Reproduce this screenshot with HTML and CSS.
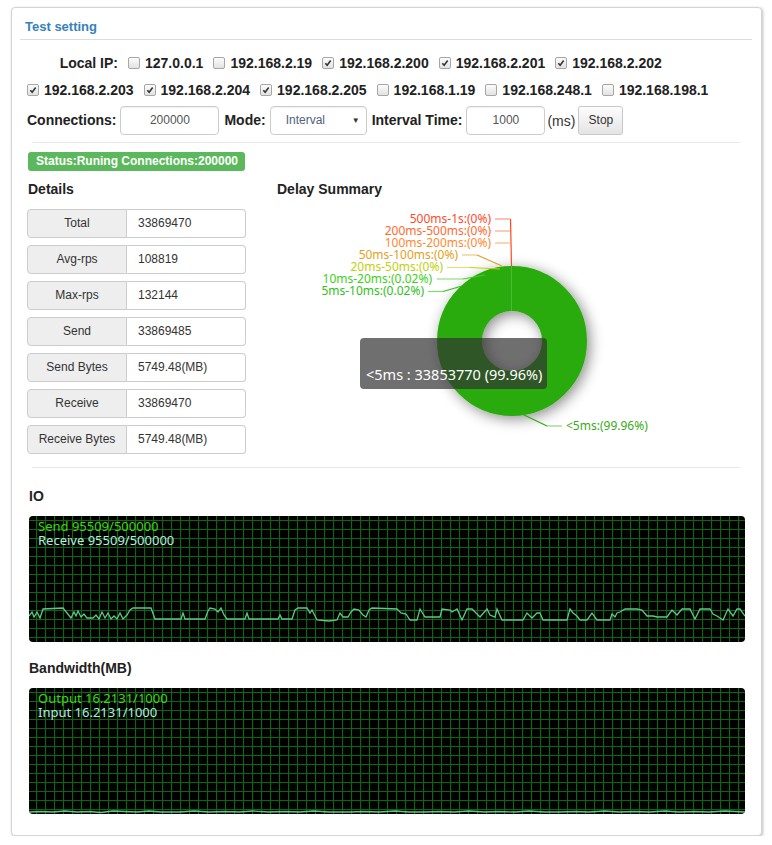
FILE: index.html
```html
<!DOCTYPE html>
<html>
<head>
<meta charset="utf-8">
<title>Test setting</title>
<link rel="stylesheet" href="styles.css">
</head>
<body>
<div class="panel">
  <div class="panel-heading">Test setting</div>
  <div class="panel-body">
    <div class="ip-row">
      <span class="lbl ip-lbl">Local IP:</span>
      <span class="ip"><span class="cb"></span>127.0.0.1</span>
      <span class="ip"><span class="cb"></span>192.168.2.19</span>
      <span class="ip"><span class="cb on"><svg viewBox="0 0 12 12"><path d="M2.8 6.2 L5 8.6 L9.2 3"/></svg></span>192.168.2.200</span>
      <span class="ip"><span class="cb on"><svg viewBox="0 0 12 12"><path d="M2.8 6.2 L5 8.6 L9.2 3"/></svg></span>192.168.2.201</span>
      <span class="ip"><span class="cb on"><svg viewBox="0 0 12 12"><path d="M2.8 6.2 L5 8.6 L9.2 3"/></svg></span>192.168.2.202</span>
      <span class="ip"><span class="cb on"><svg viewBox="0 0 12 12"><path d="M2.8 6.2 L5 8.6 L9.2 3"/></svg></span>192.168.2.203</span>
      <span class="ip"><span class="cb on"><svg viewBox="0 0 12 12"><path d="M2.8 6.2 L5 8.6 L9.2 3"/></svg></span>192.168.2.204</span>
      <span class="ip"><span class="cb on"><svg viewBox="0 0 12 12"><path d="M2.8 6.2 L5 8.6 L9.2 3"/></svg></span>192.168.2.205</span>
      <span class="ip"><span class="cb"></span>192.168.1.19</span>
      <span class="ip"><span class="cb"></span>192.168.248.1</span>
      <span class="ip"><span class="cb"></span>192.168.198.1</span>
    </div>
    <div class="ctrl-row">
      <span class="lbl">Connections:</span>
      <span class="field f-conn">200000</span>
      <span class="lbl">Mode:</span>
      <span class="field f-select">Interval<span class="caret">&#9660;</span></span>
      <span class="lbl">Interval Time:</span>
      <span class="field f-time">1000</span>
      <span class="unit">(ms)</span>
      <span class="btn">Stop</span>
    </div>
    <div class="sep"></div>
    <div class="status-line"><span class="status">Status:Runing Connections:200000</span></div>
    <div class="cols">
      <div class="col-left">
        <h4 class="title">Details</h4>
        <div class="stats">
          <div class="stat"><span class="k">Total</span><span class="v">33869470</span></div>
          <div class="stat"><span class="k">Avg-rps</span><span class="v">108819</span></div>
          <div class="stat"><span class="k">Max-rps</span><span class="v">132144</span></div>
          <div class="stat"><span class="k">Send</span><span class="v">33869485</span></div>
          <div class="stat"><span class="k">Send Bytes</span><span class="v">5749.48(MB)</span></div>
          <div class="stat"><span class="k">Receive</span><span class="v">33869470</span></div>
          <div class="stat"><span class="k">Receive Bytes</span><span class="v">5749.48(MB)</span></div>
        </div>
      </div>
      <div class="col-right">
        <h4 class="title">Delay Summary</h4>
        <svg class="pie" width="469" height="245" viewBox="277 209 469 245">
          <defs>
            <filter id="sh" x="-50%" y="-50%" width="200%" height="200%">
              <feDropShadow dx="3" dy="3" stdDeviation="7" flood-color="#000" flood-opacity="0.45"/>
            </filter>
          </defs>
          <circle cx="512" cy="341" r="52.5" fill="none" stroke="#2bab0e" stroke-width="45" filter="url(#sh)"/>
          <line x1="511.5" y1="266" x2="511.5" y2="311" stroke="#4cbb36" stroke-width="1"/>
          <g fill="none" stroke-width="1.2">
            <polyline points="495,219 510,219" stroke="#ff9585"/>
            <polyline points="510.5,219 511.5,266" stroke="#ff4a1a"/>
            <polyline points="495,231 510,231" stroke="#ffa582"/>
            <polyline points="495,243 510,243" stroke="#ffb784"/>
            <polyline points="462,255 477,255" stroke="#f0c880"/>
            <polyline points="477,255 502,266" stroke="#e0a020"/>
            <polyline points="447,267.5 470,267.5" stroke="#dbe27a"/>
            <polyline points="470,267.5 500,269" stroke="#c2d010"/>
            <polyline points="437,279 463,279" stroke="#8fe27a"/>
            <polyline points="463,279 485,275" stroke="#40d020"/>
            <polyline points="428,291.5 443,291.5" stroke="#86d874"/>
            <polyline points="443,291.5 462,286" stroke="#30c018"/>
            <polyline points="522,414 547,426" stroke="#2aab0e"/>
            <polyline points="547,426 562,426" stroke="#8fd47f"/>
          </g>
          <g class="pl">
            <text x="491" y="223" fill="#ff4a2a">500ms-1s:(0%)</text>
            <text x="491" y="235" fill="#ff6a30">200ms-500ms:(0%)</text>
            <text x="491" y="247" fill="#ff8a30">100ms-200ms:(0%)</text>
            <text x="458" y="259" fill="#e6a020">50ms-100ms:(0%)</text>
            <text x="443" y="271" fill="#c0d010">20ms-50ms:(0%)</text>
            <text x="432" y="283" fill="#40d020">10ms-20ms:(0.02%)</text>
            <text x="424" y="295" fill="#30c020">5ms-10ms:(0.02%)</text>
          </g>
          <text class="pl-start" x="566" y="430" fill="#3aaa20">&lt;5ms:(99.96%)</text>
          <rect x="360" y="338" width="187" height="51" rx="4" fill="rgba(50,50,50,0.7)"/>
          <text class="tip" x="366" y="380">&lt;5ms : 33853770 (99.96%)</text>
        </svg>
      </div>
    </div>
    <div class="sep sep2"></div>
    <h4 class="title sec">IO</h4>
    <div class="scope">
      <svg width="716" height="126" viewBox="0 0 716 126">
        <defs>
          <pattern id="grid" width="9" height="9" x="7" y="4" patternUnits="userSpaceOnUse">
            <path d="M0 0.5 H9 M0.5 0 V9" stroke="#0c680c" stroke-width="1.2" fill="none"/>
          </pattern>
        </defs>
        <rect width="716" height="126" fill="url(#grid)"/>
        <path fill="none" stroke="#5cc88a" stroke-width="1.3" d="M0,100 L3,96 L5,101 L8,96 L11,102 L14,93 L34,92 L38,97 L42,102 L45,96 L47,100 L49,95 L52,101 L55,98 L58,102 L64,102 L67,99 L70,103 L73,96 L76,102 L79,97 L82,103 L85,100 L88,103 L91,97 L94,103 L98,99 L101,94 L104,92 L122,92 L126,103 L152,103 L154,97 L156,103 L176,103 L179,95 L181,92 L186,93 L189,96 L192,92 L195,99 L198,103 L216,103 L218,97 L220,103 L249,103 L251,99 L253,103 L263,103 L266,94 L269,92 L278,92 L281,97 L283,94 L286,100 L288,104 L300,105 L308,104 L311,97 L314,101 L319,101 L322,96 L325,93 L330,94 L334,99 L337,101 L340,94 L343,92 L368,93 L372,97 L377,98 L381,104 L388,104 L391,93 L396,101 L411,101 L413,93 L421,94 L423,96 L428,93 L433,104 L438,93 L443,93 L446,96 L451,101 L458,93 L461,99 L466,101 L468,93 L473,104 L494,104 L498,97 L503,102 L508,97 L511,97 L514,104 L538,104 L541,93 L544,97 L548,100 L551,104 L558,104 L563,97 L568,104 L581,104 L583,98 L586,101 L588,97 L591,96 L596,93 L608,93 L613,94 L618,100 L624,100 L628,101 L638,101 L643,94 L648,99 L653,93 L661,93 L666,103 L671,93 L681,93 L684,98 L688,100 L694,104 L699,93 L704,100 L708,93 L711,93 L716,100"/>
        <text class="st s1" x="9" y="14.5">Send 95509/500000</text>
        <text class="st s2" x="9" y="28.5">Receive 95509/500000</text>
      </svg>
    </div>
    <h4 class="title sec sec2">Bandwidth(MB)</h4>
    <div class="scope">
      <svg width="716" height="126" viewBox="0 0 716 126">
        <rect width="716" height="126" fill="url(#grid)"/>
        <path fill="none" stroke="#5cc88a" stroke-width="1.3" d="M0,124 L12,123.5 L24,124 L36,123 L48,124 L60,123.5 L72,124.5 L84,123 L96,123.5 L108,124 L120,123 L132,124 L150,124 L165,123 L180,124 L196,123.5 L210,124 L224,123 L240,124 L256,123.5 L270,124 L285,123 L300,124 L320,124 L335,123.5 L350,124 L366,123 L380,124 L396,124 L410,123.5 L425,124 L440,123 L456,124 L470,123.5 L486,124 L500,123 L516,124 L530,124 L546,123.5 L560,124 L576,123 L590,124 L606,123.5 L620,124 L636,123 L650,124 L666,123.5 L680,124 L696,123 L716,124"/>
        <text class="st s1" x="9" y="14.5">Output 16.2131/1000</text>
        <text class="st s2" x="9" y="28.5">Input 16.2131/1000</text>
      </svg>
    </div>
  </div>
</div>
</body>
</html>
```

FILE: styles.css
```css
* { box-sizing: border-box; }
body {
  margin: 0;
  background: #fff;
  font-family: "Liberation Sans", Arial, sans-serif;
  color: #333;
}
.panel {
  width: 751px;
  margin: 7px 0 0 11px;
  border: 1px solid #d4d4d4;
  border-radius: 4px;
  box-shadow: 1px 1px 3px rgba(0, 0, 0, 0.25);
  background: #fff;
}
.panel-heading {
  margin: 0 9px 0 8px;
  padding: 11px 4px 5px 5px;
  font-size: 13px;
  line-height: 15px;
  font-weight: bold;
  color: #3582bd;
  border-bottom: 1px solid #ddd;
}
.panel-body {
  padding: 10px 15px 21px 15px;
}
.ip-row {
  display: flex;
  flex-wrap: wrap;
  align-items: center;
  column-gap: 10px;
}
.lbl {
  font-size: 14px;
  font-weight: bold;
  color: #222;
  line-height: 27px;
  white-space: nowrap;
}
.ip-lbl {
  width: 91px;
  text-align: right;
}
.ip {
  display: flex;
  align-items: center;
  gap: 5px;
  font-size: 14px;
  font-weight: bold;
  color: #222;
  line-height: 27px;
  white-space: nowrap;
}
.cb {
  width: 12px;
  height: 12px;
  border: 1px solid #a6a6a6;
  border-radius: 2px;
  background: linear-gradient(#fcfcfc, #e2e2e2);
  display: inline-flex;
  margin-top: -1px;
}
.cb svg {
  width: 10px;
  height: 10px;
  fill: none;
  stroke: #333;
  stroke-width: 1.9;
}
.ctrl-row {
  display: flex;
  align-items: center;
  margin-top: 2px;
  height: 29px;
}
.ctrl-row .lbl { margin-right: 4px; }
.field {
  height: 29px;
  border: 1px solid #ccc;
  border-radius: 4px;
  font-size: 12px;
  line-height: 27px;
  color: #555;
  text-align: center;
  margin-right: 5px;
  box-shadow: inset 0 1px 1px rgba(0, 0, 0, 0.06);
}
.f-conn { width: 99px; }
.f-select {
  width: 97px;
  text-align: left;
  padding-left: 15px;
  position: relative;
  color: #52627a;
}
.caret {
  position: absolute;
  right: 6px;
  top: 0;
  font-size: 8px;
  color: #333;
}
.f-time { width: 79px; margin-right: 2px; }
.unit {
  font-size: 14px;
  color: #333;
  margin-right: 3px;
}
.btn {
  width: 45px;
  height: 29px;
  border: 1px solid #c8c8c8;
  border-radius: 3px;
  background: linear-gradient(#fdfdfd, #e4e4e4);
  font-size: 12px;
  line-height: 27px;
  text-align: center;
  color: #333;
}
.sep {
  margin: 7px 6px 0 5px;
  border-top: 1px solid #e8e8e8;
}
.status-line {
  margin-top: 8px;
  height: 19px;
  margin-left: 1px;
}
.status {
  display: inline-block;
  height: 19px;
  line-height: 19px;
  padding: 0 7px 0 8px;
  background: #5cb85c;
  color: #fff;
  font-weight: bold;
  font-size: 12px;
  border-radius: 3px;
}
.cols {
  display: flex;
  margin-top: 11px;
}
.col-left { width: 250px; }
.col-right { flex: 1; }
.title {
  margin: 0;
  font-size: 14px;
  line-height: 16px;
  font-weight: bold;
  color: #222;
}
.col-left .title { margin-left: 1px; }
.stats {
  margin-top: 12px;
  display: flex;
  flex-direction: column;
  gap: 7px;
}
.stat {
  display: flex;
  height: 29px;
  font-size: 12px;
}
.stat .k {
  width: 100px;
  background: #eee;
  border: 1px solid #ccc;
  border-radius: 4px 0 0 4px;
  text-align: center;
  line-height: 27px;
  color: #333;
}
.stat .v {
  width: 119px;
  border: 1px solid #ccc;
  border-left: 0;
  border-radius: 0 4px 4px 0;
  padding-left: 11px;
  line-height: 27px;
  color: #333;
}
.pie {
  display: block;
  margin-top: 12px;
}
.pl text {
  font-family: "Noto Sans", "Open Sans", sans-serif;
  font-size: 12px;
  text-anchor: end;
}
.pl-start {
  font-family: "Noto Sans", "Open Sans", sans-serif;
  font-size: 12px;
  text-anchor: start;
}
.tip {
  font-family: "Noto Sans", "Open Sans", sans-serif;
  font-size: 14.5px;
  fill: #fff;
}
.sep2 { margin-top: 13px; }
.sec {
  margin-top: 20px;
  margin-left: 2px;
}
.sec2 { margin-top: 18px; }
.scope {
  margin: 12px 0 0 2px;
  width: 716px;
  height: 126px;
  background: #000;
  border-radius: 4px;
  overflow: hidden;
}
.scope svg { display: block; }
.st {
  font-family: "Noto Sans", "Open Sans", sans-serif;
  font-size: 13px;
}
.s1 { fill: #3ada0a; }
.s2 { fill: #b4ece0; }
```
